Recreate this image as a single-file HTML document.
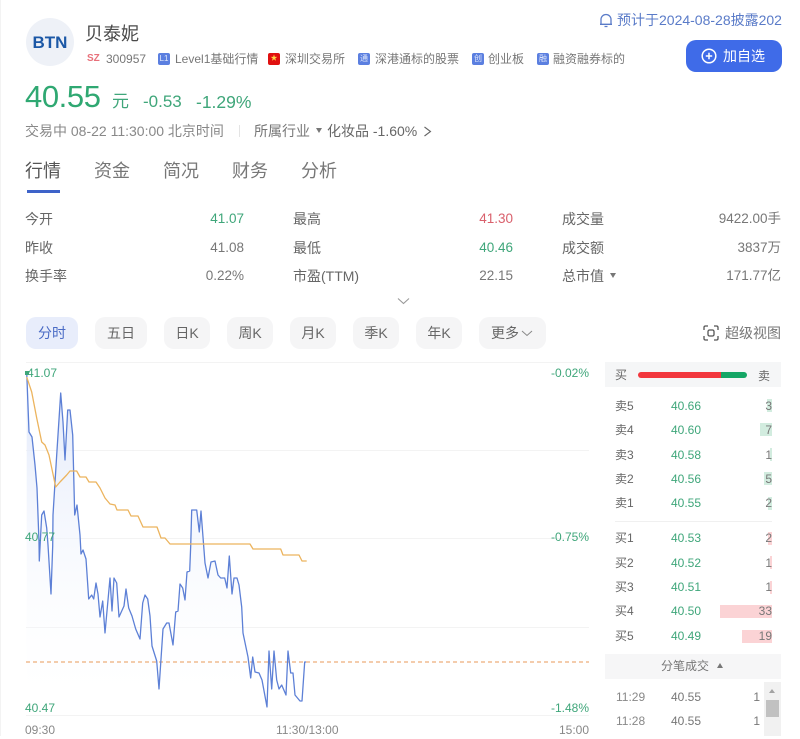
<!DOCTYPE html>
<html lang="zh">
<head>
<meta charset="utf-8">
<title>贝泰妮</title>
<style>
html,body{margin:0;padding:0;background:#fff}
body{width:800px;height:736px;position:relative;overflow:hidden;font-family:"Liberation Sans","Noto Sans CJK SC",sans-serif;color:#666;font-size:14px;filter:blur(.3px)}
.t{position:absolute;white-space:nowrap;line-height:18px;height:18px;margin-top:-8px}
.r{text-align:right}
.g{color:#3fa67a}
.red{color:#d9606c}
.v{font-size:13.500px}
.tag{position:absolute;top:53px;width:12px;height:12px;border-radius:2px;background:#5b7fe0;color:#dfe7fb;font-size:8px;line-height:12px;text-align:center}
.lbl{font-size:12px;color:#777}
.tab{font-size:18px;line-height:24px;height:24px;margin-top:-12px;color:#777}
.btn{position:absolute;top:317px;height:32px;border-radius:10px;background:#f5f5f6;color:#666;font-size:14px;line-height:32px;text-align:center}
.bar{position:absolute;height:13px}
.bg{background:#d2ecdf}
.br{background:#fbd3d5}
.ob{font-size:12px}
.q{color:#777}
.dn,.up{position:absolute;width:0;height:0;border-left:3.500px solid transparent;border-right:3.500px solid transparent}
.dn{border-top:5px solid #777}
.up{border-bottom:5px solid #777}
</style>
</head>
<body>
<div style="position:absolute;left:0;top:0;width:1px;height:736px;background:#f3f3f3"></div>

<!-- header -->
<div style="position:absolute;left:26px;top:18px;width:48px;height:48px;border-radius:50%;background:#eef1f7;color:#1c58a6;font-weight:bold;font-size:17px;line-height:49px;text-align:center">BTN</div>
<div class="t" style="left:85px;top:33px;font-size:18px;color:#4a4a4a">贝泰妮</div>
<div class="t" style="left:87px;top:58px;font-size:10px;font-weight:bold;color:#e8707a">SZ</div>
<div class="t lbl" style="left:106px;top:58px">300957</div>
<div class="tag" style="left:158px">L1</div>
<div class="t lbl" style="left:175px;top:58px">Level1基础行情</div>
<div class="tag" style="left:268px;background:#e01010;color:#ffd84a;font-size:7px">★</div>
<div class="t lbl" style="left:285px;top:58px">深圳交易所</div>
<div class="tag" style="left:358px">通</div>
<div class="t lbl" style="left:375px;top:58px">深港通标的股票</div>
<div class="tag" style="left:472px">创</div>
<div class="t lbl" style="left:488px;top:58px">创业板</div>
<div class="tag" style="left:537px">融</div>
<div class="t lbl" style="left:553px;top:58px">融资融券标的</div>

<svg style="position:absolute;left:599px;top:13px" width="14" height="15" viewBox="0 0 14 15" fill="none" stroke="#5a7bc8" stroke-width="1.3"><path d="M2 11V6.500a5 5 0 0 1 10 0V11M1 11.300h12M5.500 13.500h3"/></svg>
<div style="position:absolute;left:617px;top:10px;width:165px;height:20px;overflow:hidden;white-space:nowrap;color:#5a7bc8;font-size:14px;line-height:20px">预计于2024-08-28披露2024年中报</div>

<div style="position:absolute;left:686px;top:40px;width:96px;height:32px;border-radius:10px;background:#3f6be8"></div>
<svg style="position:absolute;left:701px;top:48px" width="16" height="16" viewBox="0 0 16 16" fill="none" stroke="#fff" stroke-width="1.500"><circle cx="8" cy="8" r="6.800"/><path d="M4.800 8h6.400M8 4.800v6.400"/></svg>
<div class="t" style="left:723px;top:55px;color:#fff;font-size:14px">加自选</div>

<!-- price -->
<div class="t" style="left:25px;top:97px;font-size:31px;line-height:36px;height:36px;margin-top:-18px;letter-spacing:-.4px;color:#2fa872">40.55</div>
<div class="t" style="left:112px;top:101px;font-size:17px;color:#3fa67a">元</div>
<div class="t g" style="left:143px;top:101px;font-size:17px">-0.53</div>
<div class="t g" style="left:196px;top:101px;font-size:17.500px">-1.29%</div>

<div class="t" style="left:25px;top:130px;color:#888">交易中 08-22 11:30:00 北京时间</div>
<div style="position:absolute;left:239px;top:125px;width:1px;height:12px;background:#e4e4e4"></div>
<div class="t" style="left:254px;top:130px;color:#777">所属行业</div>
<div class="dn" style="left:316px;top:128px"></div>
<div class="t" style="left:327px;top:130px;color:#666">化妆品 -1.60%</div>
<svg style="position:absolute;left:423px;top:126px" width="9" height="11" viewBox="0 0 9 11" fill="none" stroke="#666" stroke-width="1.100"><path d="M1.500 1l6 4.500-6 4.500"/></svg>

<!-- tabs -->
<div class="t tab" style="left:25px;top:171px;color:#555">行情</div>
<div class="t tab" style="left:94px;top:171px">资金</div>
<div class="t tab" style="left:163px;top:171px">简况</div>
<div class="t tab" style="left:232px;top:171px">财务</div>
<div class="t tab" style="left:301px;top:171px">分析</div>
<div style="position:absolute;left:27px;top:190px;width:33px;height:3px;background:#3e63c9"></div>

<!-- stats -->
<div class="t" style="left:25px;top:218px">今开</div><div class="t v r g" style="right:556px;top:218px">41.07</div>
<div class="t" style="left:293px;top:218px">最高</div><div class="t v r red" style="right:287px;top:218px">41.30</div>
<div class="t" style="left:562px;top:218px">成交量</div><div class="t v r" style="right:19px;top:218px;color:#777">9422.00手</div>
<div class="t" style="left:25px;top:247px">昨收</div><div class="t v r" style="right:556px;top:247px;color:#777">41.08</div>
<div class="t" style="left:293px;top:247px">最低</div><div class="t v r g" style="right:287px;top:247px">40.46</div>
<div class="t" style="left:562px;top:247px">成交额</div><div class="t v r" style="right:19px;top:247px;color:#777">3837万</div>
<div class="t" style="left:25px;top:275px">换手率</div><div class="t v r" style="right:556px;top:275px;color:#777">0.22%</div>
<div class="t" style="left:293px;top:275px">市盈(TTM)</div><div class="t v r" style="right:287px;top:275px;color:#777">22.15</div>
<div class="t" style="left:562px;top:275px">总市值</div><div class="dn" style="left:610px;top:273px"></div><div class="t v r" style="right:19px;top:275px;color:#777">171.77亿</div>
<svg style="position:absolute;left:397px;top:297px" width="13" height="8" viewBox="0 0 13 8" fill="none" stroke="#999" stroke-width="1.100"><path d="M1 1.500l5.500 5 5.500-5"/></svg>

<!-- period buttons -->
<div class="btn" style="left:26px;width:52px;background:#e8edfb;color:#4a6bc5">分时</div>
<div class="btn" style="left:95px;width:52px">五日</div>
<div class="btn" style="left:164px;width:46px">日K</div>
<div class="btn" style="left:227px;width:46px">周K</div>
<div class="btn" style="left:290px;width:46px">月K</div>
<div class="btn" style="left:353px;width:46px">季K</div>
<div class="btn" style="left:416px;width:46px">年K</div>
<div class="btn" style="left:479px;width:67px;text-align:left;text-indent:12px">更多</div>
<svg style="position:absolute;left:521px;top:330px" width="12" height="7" viewBox="0 0 12 7" fill="none" stroke="#888" stroke-width="1"><path d="M1 1l5 4.500L11 1"/></svg>
<svg style="position:absolute;left:703px;top:325px" width="16" height="16" viewBox="0 0 16 16" fill="none" stroke="#555" stroke-width="1.300"><path d="M1 5V2.500Q1 1 2.500 1H5M11 1h2.500Q15 1 15 2.500V5M15 11v2.500q0 1.500-1.500 1.500H11M5 15H2.500Q1 15 1 13.500V11"/><rect x="5" y="5" width="6" height="6" rx="1.500"/></svg>
<div class="t r" style="right:19px;top:332px;font-size:14px;color:#777">超级视图</div>

<!-- chart -->
<svg style="position:absolute;left:0;top:355px" width="600" height="381" viewBox="0 355 600 381">
<defs><linearGradient id="f" x1="0" y1="0" x2="0" y2="1"><stop offset="0" stop-color="#dfe7fa"/><stop offset="1" stop-color="#fff" stop-opacity="0"/></linearGradient></defs>
<g stroke="#f3f3f3" stroke-width="1"><path d="M26 362.500H589M26 450.500H589M26 538.500H589M26 627.500H589M26 715.500H589"/></g>
<path fill="url(#f)" d="M26.700 372L29 432 32 437 35 465 37 488 39 542 39.300 561 41.700 515 44 511 46.700 528 48 545 51 594 52.700 546 53 515 56.700 455 60.700 393 63 422 65 460 67.700 410 70 410 72.700 435 74.700 515 77 505 80 535 81 554 83 550 86 559 88.700 599 91.700 595 93.700 599 96 583 98 594 100 617 102.700 601 105 633 110 578 112 611 114 578 116.700 583 119 617 124 606 126 589 128.700 608 132 616 135.700 629 140 639 142.700 603 145 595 147.700 599 150 616 152 646 156.700 661 159 689 163 629 166.700 623 169 623 173 645 175.700 612 178 611 180 584 182.700 588 185 600 187 572 189.700 571 190.700 546 191.700 510 196.700 510 199.300 532 201 511 205 563 208 578 211 562 215 561 218 575 220.700 578 224.700 578 227 588 229.300 556 232 594 234 578 237 578 239 585 241.700 607 243 633 248 657 250.700 678 252.700 657 255 672 259 673 262 680 267 707 269 651 271.700 689 274 651 276.700 680 279 689 281.700 685 286 695 288 651 290.700 673 293 673 295 695 300 701 302 701 304.700 662 304.700 715 26.700 715Z"/>
<path fill="none" stroke="#e89a5a" stroke-width="1" stroke-dasharray="4 3" d="M26 662H589"/>
<path fill="none" stroke="#5d80d6" stroke-width="1.300" stroke-linejoin="round" d="M26.700 372L29 432 32 437 35 465 37 488 39 542 39.300 561 41.700 515 44 511 46.700 528 48 545 51 594 52.700 546 53 515 56.700 455 60.700 393 63 422 65 460 67.700 410 70 410 72.700 435 74.700 515 77 505 80 535 81 554 83 550 86 559 88.700 599 91.700 595 93.700 599 96 583 98 594 100 617 102.700 601 105 633 110 578 112 611 114 578 116.700 583 119 617 124 606 126 589 128.700 608 132 616 135.700 629 140 639 142.700 603 145 595 147.700 599 150 616 152 646 156.700 661 159 689 163 629 166.700 623 169 623 173 645 175.700 612 178 611 180 584 182.700 588 185 600 187 572 189.700 571 190.700 546 191.700 510 196.700 510 199.300 532 201 511 205 563 208 578 211 562 215 561 218 575 220.700 578 224.700 578 227 588 229.300 556 232 594 234 578 237 578 239 585 241.700 607 243 633 248 657 250.700 678 252.700 657 255 672 259 673 262 680 267 707 269 651 271.700 689 274 651 276.700 680 279 689 281.700 685 286 695 288 651 290.700 673 293 673 295 695 300 701 302 701 304.700 662 306 662"/>
<path fill="none" stroke="#ecb45e" stroke-width="1.300" stroke-linejoin="round" d="M26.700 377L31.700 392 36.700 418 41.700 442 45 445 49 455 55.700 487 60 482 66.700 475 70 471 76.700 471 80 477 86 477 89 482 96 482 100 488 105 498 110 504 115 505 117 510 128 510 131 516 138 516 143 527 157 527 161 538 165 538 170 544 250 544 253 549 280.700 549 283 555 299 555 302 561 306.700 561"/>
<rect x="25" y="371" width="4" height="4" fill="#3fa67a"/>
</svg>
<div class="t g" style="left:27px;top:372px;font-size:12px">41.07</div>
<div class="t g" style="left:25px;top:536px;font-size:12px">40.77</div>
<div class="t g" style="left:25px;top:707px;font-size:12px">40.47</div>
<div class="t r g" style="right:211px;top:372px;font-size:12px">-0.02%</div>
<div class="t r g" style="right:211px;top:536px;font-size:12px">-0.75%</div>
<div class="t r g" style="right:211px;top:707px;font-size:12px">-1.48%</div>
<div class="t" style="left:25px;top:729px;font-size:12px;color:#888">09:30</div>
<div class="t" style="left:276px;top:729px;font-size:12px;color:#888">11:30/13:00</div>
<div class="t r" style="right:211px;top:729px;font-size:12px;color:#888">15:00</div>

<!-- order book -->
<div style="position:absolute;left:605px;top:362px;width:176px;height:25px;background:#f5f6f7"></div>
<div class="t ob" style="left:615px;top:374px">买</div>
<div class="t ob" style="left:758px;top:375px">卖</div>
<div style="position:absolute;left:638px;top:372px;width:109px;height:6px;border-radius:3px;background:linear-gradient(90deg,#f2373d 0,#f2373d 76%,#14a665 76%,#14a665 100%)"></div>

<div class="bar bg" style="left:767px;top:399px;width:5px"></div>
<div class="bar bg" style="left:760px;top:423px;width:12px"></div>
<div class="bar bg" style="left:770px;top:448px;width:2px"></div>
<div class="bar bg" style="left:764px;top:472px;width:8px"></div>
<div class="bar bg" style="left:768px;top:497px;width:4px"></div>
<div class="bar br" style="left:768px;top:532px;width:4px"></div>
<div class="bar br" style="left:770px;top:556px;width:2px"></div>
<div class="bar br" style="left:770px;top:581px;width:2px"></div>
<div class="bar br" style="left:720px;top:605px;width:52px"></div>
<div class="bar br" style="left:742px;top:630px;width:30px"></div>

<div class="t ob" style="left:615px;top:405px">卖5</div><div class="t ob g" style="left:671px;top:405px">40.66</div><div class="t ob r q" style="right:28px;top:405px">3</div>
<div class="t ob" style="left:615px;top:429px">卖4</div><div class="t ob g" style="left:671px;top:429px">40.60</div><div class="t ob r q" style="right:28px;top:429px">7</div>
<div class="t ob" style="left:615px;top:454px">卖3</div><div class="t ob g" style="left:671px;top:454px">40.58</div><div class="t ob r q" style="right:28px;top:454px">1</div>
<div class="t ob" style="left:615px;top:478px">卖2</div><div class="t ob g" style="left:671px;top:478px">40.56</div><div class="t ob r q" style="right:28px;top:478px">5</div>
<div class="t ob" style="left:615px;top:502px">卖1</div><div class="t ob g" style="left:671px;top:502px">40.55</div><div class="t ob r q" style="right:28px;top:502px">2</div>
<div style="position:absolute;left:615px;top:521px;width:157px;height:1px;background:#f0f0f0"></div>
<div class="t ob" style="left:615px;top:537px">买1</div><div class="t ob g" style="left:671px;top:537px">40.53</div><div class="t ob r q" style="right:28px;top:537px">2</div>
<div class="t ob" style="left:615px;top:562px">买2</div><div class="t ob g" style="left:671px;top:562px">40.52</div><div class="t ob r q" style="right:28px;top:562px">1</div>
<div class="t ob" style="left:615px;top:586px">买3</div><div class="t ob g" style="left:671px;top:586px">40.51</div><div class="t ob r q" style="right:28px;top:586px">1</div>
<div class="t ob" style="left:615px;top:610px">买4</div><div class="t ob g" style="left:671px;top:610px">40.50</div><div class="t ob r q" style="right:28px;top:610px">33</div>
<div class="t ob" style="left:615px;top:635px">买5</div><div class="t ob g" style="left:671px;top:635px">40.49</div><div class="t ob r q" style="right:28px;top:635px">19</div>

<div style="position:absolute;left:605px;top:654px;width:176px;height:25px;background:#f6f6f7"></div>
<div class="t ob" style="left:661px;top:665px;color:#777">分笔成交</div>
<div class="up" style="left:717px;top:663px"></div>

<div class="t ob" style="left:616px;top:696px;color:#888">11:29</div><div class="t ob q" style="left:671px;top:696px">40.55</div><div class="t ob r q" style="right:40px;top:696px">1</div>
<div class="t ob" style="left:616px;top:720px;color:#888">11:28</div><div class="t ob q" style="left:671px;top:720px">40.55</div><div class="t ob r q" style="right:40px;top:720px">1</div>

<div style="position:absolute;left:764px;top:682px;width:17px;height:54px;background:#f1f1f1"></div>
<div style="position:absolute;left:766px;top:700px;width:13px;height:17px;background:#c1c1c1"></div>
<div style="position:absolute;left:769px;top:689px;width:0;height:0;border-left:3.500px solid transparent;border-right:3.500px solid transparent;border-bottom:4px solid #a3a3a3"></div>
</body>
</html>
